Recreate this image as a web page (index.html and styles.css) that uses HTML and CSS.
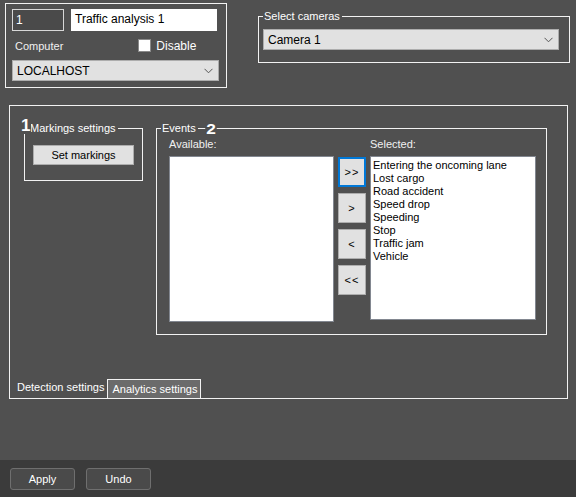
FILE: index.html
```html
<!DOCTYPE html>
<html>
<head>
<meta charset="utf-8">
<link rel="stylesheet" href="styles.css">
</head>
<body>
<div class="page">
  <div class="top">
    <div class="idbox">
      <div class="row1">
        <div class="idfield">1</div>
        <div class="namefield">Traffic analysis 1</div>
      </div>
      <div class="row2">
        <span class="lbl">Computer</span>
        <span class="chk"><span class="box"></span>Disable</span>
      </div>
      <div class="select host"><span>LOCALHOST</span><svg class="chev" width="9" height="6" viewBox="0 0 9 6"><path d="M0.5 0.8 L4.5 4.8 L8.5 0.8" fill="none" stroke="#555" stroke-width="1"/></svg></div>
    </div>
    <div class="group cams">
      <span class="legend">Select cameras</span>
      <div class="select cam"><span>Camera 1</span><svg class="chev" width="9" height="6" viewBox="0 0 9 6"><path d="M0.5 0.8 L4.5 4.8 L8.5 0.8" fill="none" stroke="#555" stroke-width="1"/></svg></div>
    </div>
  </div>

  <div class="main">
    <div class="content">
      <div class="group mark">
        <span class="legend">Markings settings</span>
        <b class="num num1">1</b>
        <div class="btn setmark">Set markings</div>
      </div>
      <div class="group events">
        <span class="legend">Events</span>
        <b class="num num2">2</b>
        <div class="cols">
          <div class="col">
            <div class="collbl">Available:</div>
            <div class="list avail"></div>
          </div>
          <div class="arrows">
            <div class="btn arr active">&gt;&gt;</div>
            <div class="btn arr">&gt;</div>
            <div class="btn arr">&lt;</div>
            <div class="btn arr">&lt;&lt;</div>
          </div>
          <div class="col">
            <div class="collbl">Selected:</div>
            <div class="list sel">
              <div>Entering the oncoming lane</div>
              <div>Lost cargo</div>
              <div>Road accident</div>
              <div>Speed drop</div>
              <div>Speeding</div>
              <div>Stop</div>
              <div>Traffic jam</div>
              <div>Vehicle</div>
            </div>
          </div>
        </div>
      </div>
    </div>
    <div class="tabs">
      <span class="tab">Detection settings</span>
      <span class="tab on">Analytics settings</span>
    </div>
  </div>

  <div class="bottom">
    <div class="dbtn">Apply</div>
    <div class="dbtn">Undo</div>
  </div>
</div>
</body>
</html>
```
FILE: styles.css
```css
html, body {
  margin: 0;
  padding: 0;
}
body {
  background: #505050;
  font-family: "Liberation Sans", Arial, sans-serif;
  font-size: 11px;
  color: #ffffff;
}
.page {
  width: 576px;
  height: 497px;
  display: flex;
  flex-direction: column;
  overflow: hidden;
}
.top {
  display: flex;
  align-items: flex-start;
  padding: 3px 0 0 5px;
}
.idbox {
  box-sizing: border-box;
  width: 222px;
  height: 85px;
  border: 1px solid #f2f2f2;
  padding: 5px 0 0 6px;
}
.row1 {
  display: flex;
  gap: 7px;
}
.idfield {
  box-sizing: border-box;
  width: 52px;
  height: 22px;
  border: 1px solid #d8d8d8;
  background: #4a4a4a;
  padding: 3px 0 0 3px;
  font-size: 12px;
}
.namefield {
  box-sizing: border-box;
  width: 146px;
  height: 22px;
  background: #fff;
  color: #000;
  padding: 3px 0 0 4px;
  font-size: 12px;
}
.row2 {
  display: flex;
  height: 29px;
  align-items: center;
  padding-left: 3px;
}
.lbl {
  color: #f0f0f0;
}
.chk {
  margin-left: 75px;
  display: flex;
  align-items: center;
  gap: 5px;
  font-size: 12px;
}
.box {
  display: inline-block;
  box-sizing: border-box;
  width: 13px;
  height: 13px;
  background: #fff;
  border: 1px solid #8a8a8a;
}
.select {
  box-sizing: border-box;
  height: 21px;
  background: #e1e1e1;
  border: 1px solid #adadad;
  color: #000;
  font-size: 12px;
  display: flex;
  align-items: center;
  justify-content: space-between;
  padding: 0 5px 0 4px;
}
.host {
  width: 207px;
}
.group {
  position: relative;
  box-sizing: border-box;
  border: 1px solid #f2f2f2;
}
.legend {
  position: absolute;
  top: -8px;
  left: 4px;
  background: #505050;
  padding: 0 2px 0 1px;
  color: #fff;
  font-size: 11px;
  line-height: 14px;
  white-space: nowrap;
}
.cams {
  margin: 13px 0 0 31px;
  width: 312px;
  height: 47px;
  padding: 12px 0 0 4px;
}
.cam {
  width: 296px;
}
.main {
  box-sizing: border-box;
  margin: 17px 0 0 9px;
  width: 559px;
  height: 294px;
  border: 1px solid #f2f2f2;
  display: flex;
  flex-direction: column;
}
.content {
  display: flex;
  align-items: flex-start;
  padding: 22px 0 0 14px;
  gap: 13px;
}
.mark {
  width: 119px;
  height: 53px;
  padding: 16px 0 0 8px;
}
.num {
  position: absolute;
  font-weight: bold;
  color: #fff;
  background: #505050;
}
.num1 {
  left: -4px;
  top: -12px;
  font-size: 17px;
  line-height: 17px;
  padding: 0 1px 0 0;
}
.num2 {
  left: 49px;
  top: -8px;
  font-size: 15px;
  line-height: 15px;
  padding: 0 1px;
  transform: scaleX(1.15);
}
.btn {
  box-sizing: border-box;
  background: #e1e1e1;
  border: 1px solid #adadad;
  color: #000;
  display: flex;
  align-items: center;
  justify-content: center;
  font-size: 11px;
}
.setmark {
  width: 101px;
  height: 20px;
}
.events {
  width: 391px;
  height: 207px;
  padding: 9px 0 0 12px;
}
.cols {
  display: flex;
  align-items: flex-start;
}
.collbl {
  color: #f0f0f0;
  height: 13px;
  line-height: 13px;
}
.list {
  box-sizing: border-box;
  background: #fff;
  border: 1px solid #828790;
  color: #000;
  margin-top: 5px;
}
.avail {
  width: 165px;
  height: 166px;
}
.sel {
  width: 166px;
  height: 164px;
  padding: 2px 0 0 2px;
  line-height: 13px;
  font-size: 11px;
}
.arrows {
  display: flex;
  flex-direction: column;
  gap: 6px;
  margin: 19px 4px 0 4px;
}
.arr {
  width: 28px;
  height: 30px;
  letter-spacing: 1px;
}
.arr.active {
  border: 2px solid #0078d7;
}
.tabs {
  margin-top: auto;
  display: flex;
  align-items: flex-end;
  padding-left: 7px;
  height: 19px;
}
.tab {
  box-sizing: border-box;
  height: 19px;
  padding: 2px 3px 0 0;
  color: #fff;
}
.tab.on {
  background: #6b6b6b;
  border: 1px solid #f2f2f2;
  border-bottom: none;
  padding: 3px 3px 0 4px;
}
.bottom {
  margin-top: auto;
  height: 37px;
  background: #3b3b3b;
  display: flex;
  gap: 11px;
  padding: 8px 0 0 10px;
  box-sizing: border-box;
}
.dbtn {
  box-sizing: border-box;
  width: 65px;
  height: 22px;
  border: 1px solid #6f6f6f;
  border-radius: 3px;
  background: #4a4a4a;
  color: #fff;
  display: flex;
  align-items: center;
  justify-content: center;
  font-size: 11px;
}
```
